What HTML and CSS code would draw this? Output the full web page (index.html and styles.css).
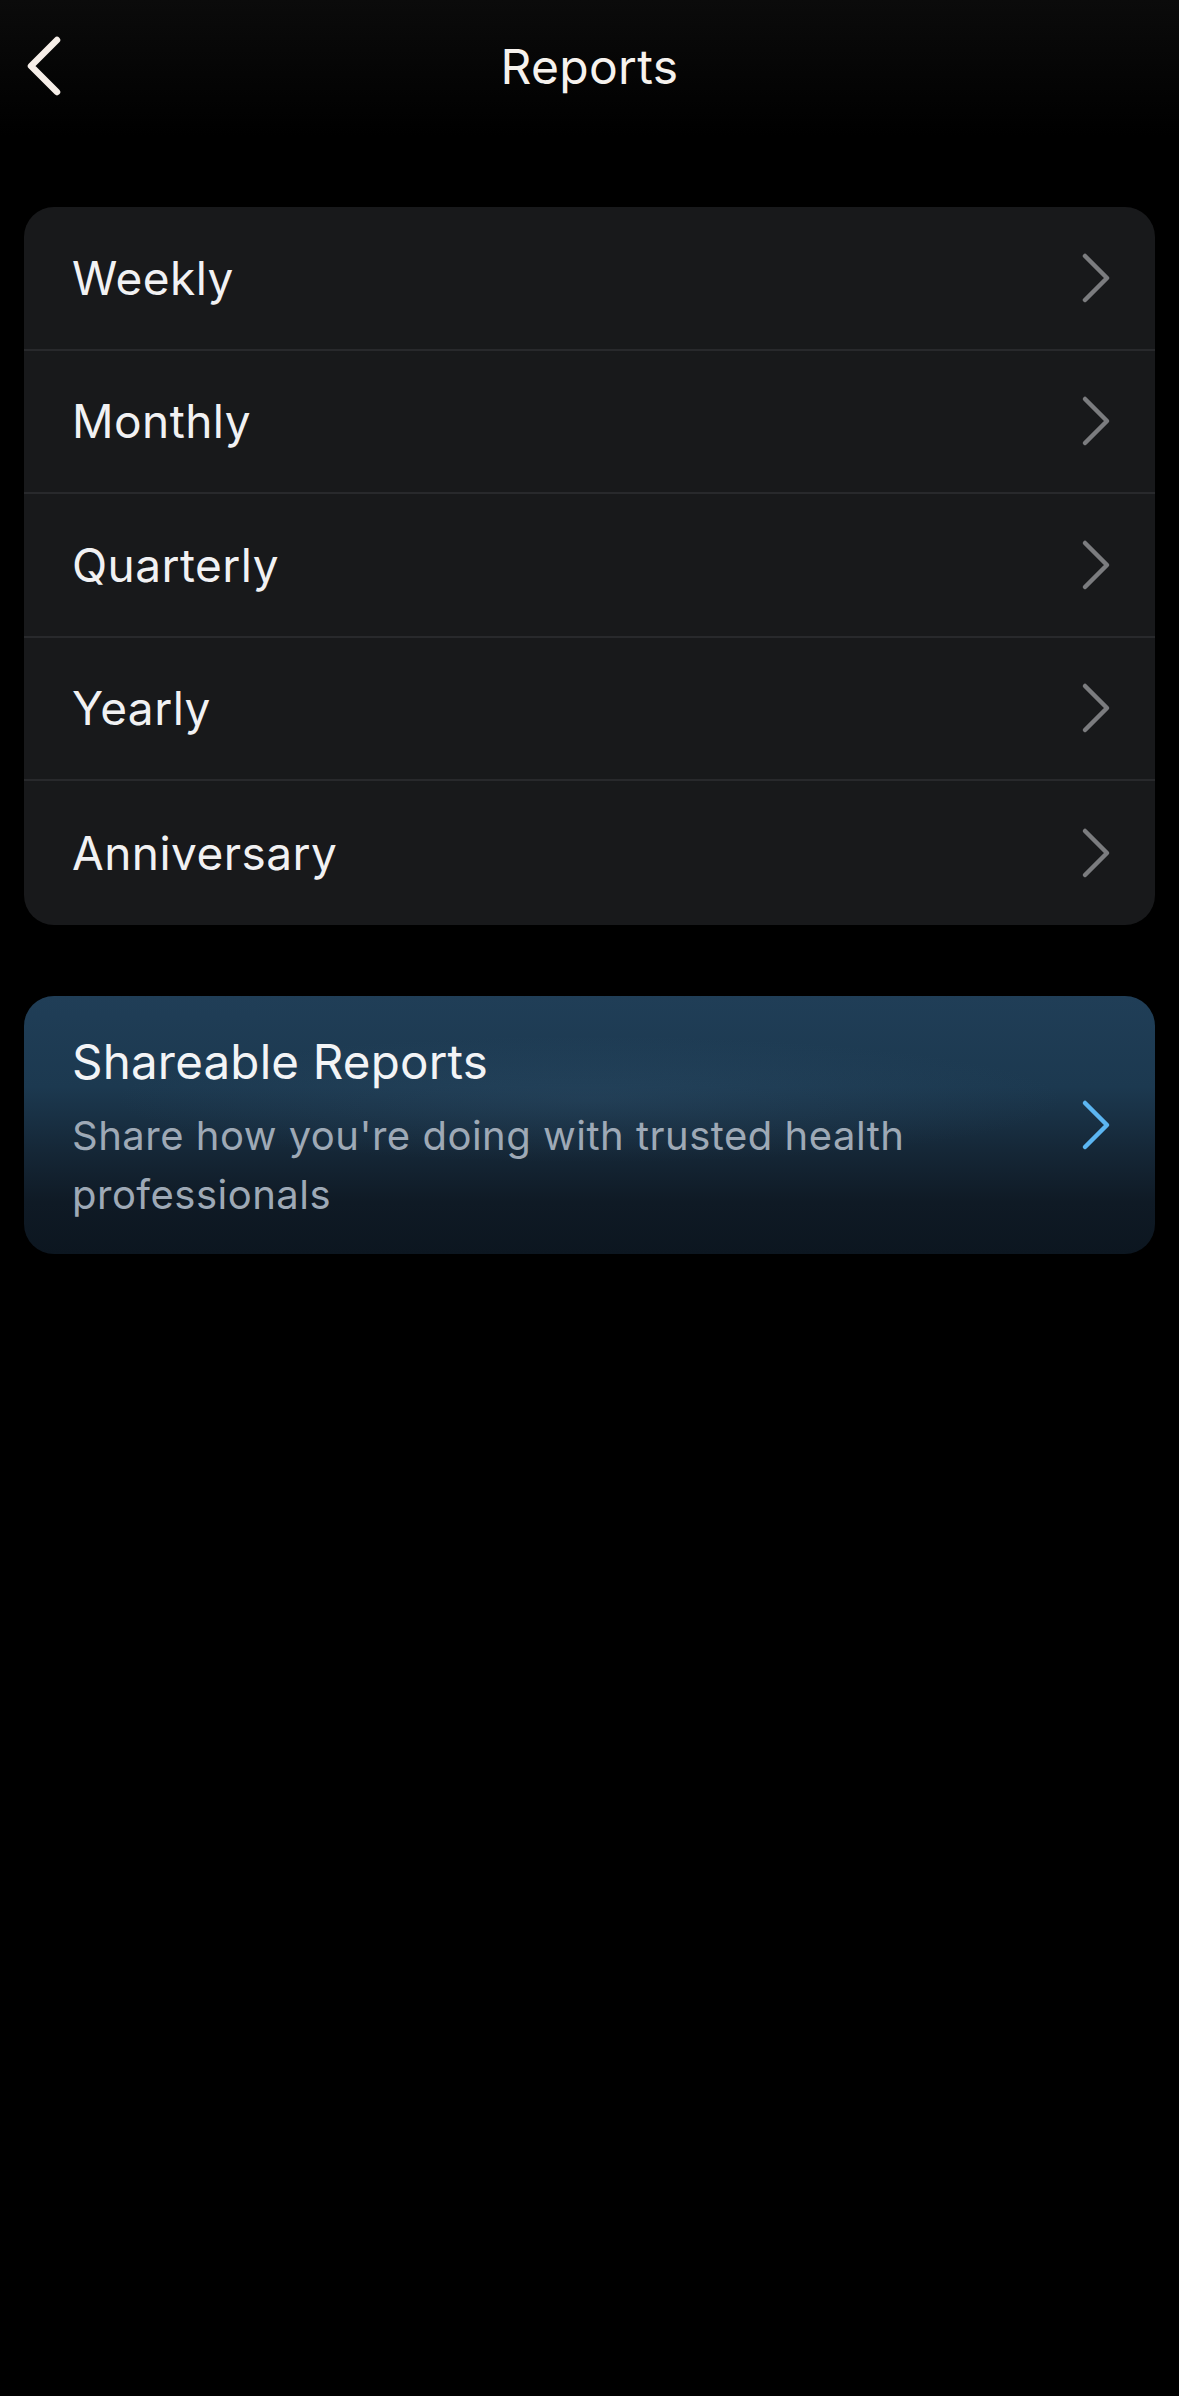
FILE: index.html
```html
<!DOCTYPE html>
<html lang="en">
<head>
<meta charset="utf-8">
<title>Reports</title>
<link rel="stylesheet" href="styles.css">
</head>
<body>
<div class="screen">
  <header class="topbar">
    <button class="back" aria-label="Back">
      <svg width="44" height="64" viewBox="0 0 44 64"><path d="M35 6 L9 32 L35 58" fill="none" stroke="#f6eee8" stroke-width="6.5" stroke-linecap="round" stroke-linejoin="round"/></svg>
    </button>
    <h1 class="title">Reports</h1>
  </header>

  <ul class="list">
    <li class="row"><span class="label">Weekly</span><svg class="chev" width="30" height="52" viewBox="0 0 30 52"><path d="M4 4 L26 26 L4 48" fill="none" stroke="#7b7c7f" stroke-width="4.5" stroke-linecap="round" stroke-linejoin="round"/></svg></li>
    <li class="row"><span class="label">Monthly</span><svg class="chev" width="30" height="52" viewBox="0 0 30 52"><path d="M4 4 L26 26 L4 48" fill="none" stroke="#7b7c7f" stroke-width="4.5" stroke-linecap="round" stroke-linejoin="round"/></svg></li>
    <li class="row"><span class="label">Quarterly</span><svg class="chev" width="30" height="52" viewBox="0 0 30 52"><path d="M4 4 L26 26 L4 48" fill="none" stroke="#7b7c7f" stroke-width="4.5" stroke-linecap="round" stroke-linejoin="round"/></svg></li>
    <li class="row"><span class="label">Yearly</span><svg class="chev" width="30" height="52" viewBox="0 0 30 52"><path d="M4 4 L26 26 L4 48" fill="none" stroke="#7b7c7f" stroke-width="4.5" stroke-linecap="round" stroke-linejoin="round"/></svg></li>
    <li class="row"><span class="label">Anniversary</span><svg class="chev" width="30" height="52" viewBox="0 0 30 52"><path d="M4 4 L26 26 L4 48" fill="none" stroke="#7b7c7f" stroke-width="4.5" stroke-linecap="round" stroke-linejoin="round"/></svg></li>
  </ul>

  <div class="share">
    <div class="share-text">
      <div class="share-title">Shareable Reports</div>
      <div class="share-sub">Share how you're doing with trusted health professionals</div>
    </div>
    <svg class="chev" width="30" height="52" viewBox="0 0 30 52"><path d="M4 4 L26 26 L4 48" fill="none" stroke="#5cb6f2" stroke-width="4.5" stroke-linecap="round" stroke-linejoin="round"/></svg>
  </div>
</div>
</body>
</html>
```

FILE: styles.css
```css
* { box-sizing: border-box; }
html, body {
  margin: 0;
  padding: 0;
  background: #000;
}
body {
  font-family: Inter, "Noto Sans", sans-serif;
  color: #f4f4f5;
  width: 1179px;
  min-height: 2396px;
}
.screen {
  min-height: 2396px;
  background: #000;
}
.topbar {
  position: relative;
  height: 136px;
  display: flex;
  align-items: flex-start;
  justify-content: center;
  background: linear-gradient(#0b0b0b, #000 100%);
}
.back {
  position: absolute;
  left: 22px;
  top: 34px;
  width: 44px;
  height: 64px;
  padding: 0;
  border: 0;
  background: none;
  display: flex;
}
.title {
  margin: 0;
  margin-top: 35px;
  font-size: 48px;
  font-weight: 400;
  line-height: 64px;
  color: #f6f2ee;
  letter-spacing: 0.3px;
}
.list {
  list-style: none;
  margin: 71px 24px 0;
  padding: 0;
  background: #18191b;
  border-radius: 30px;
  overflow: hidden;
}
.row {
  height: 143.5px;
  display: flex;
  align-items: center;
  justify-content: space-between;
  padding: 0 44px 0 48px;
  border-bottom: 2px solid #28292c;
}
.row:last-child {
  border-bottom: 0;
}
.label {
  font-size: 46px;
  line-height: 1;
  color: #f1f1f3;
  letter-spacing: 0.45px;
}
.chev { flex: none; display: block; }
.share {
  margin: 71px 24px 0;
  height: 258px;
  border-radius: 30px;
  padding: 0 44px 0 48px;
  display: flex;
  align-items: center;
  justify-content: space-between;
  background:
    radial-gradient(ellipse 60% 35% at 50% 40%, rgba(60, 95, 125, 0.22), rgba(60, 95, 125, 0) 70%),
    linear-gradient(180deg, #203e57 0%, #1c3950 35%, #152737 60%, #0f1a25 80%, #0c1620 100%);
}
.share-text {
  width: 920px;
  padding-top: 8px;
}
.share-title {
  font-size: 47.5px;
  line-height: 56px;
  color: #f3f4f6;
  letter-spacing: 0.2px;
}
.share-sub {
  margin-top: 16px;
  font-size: 40px;
  line-height: 59px;
  color: #9ea9b6;
  letter-spacing: 0.5px;
  width: 900px;
}
```
